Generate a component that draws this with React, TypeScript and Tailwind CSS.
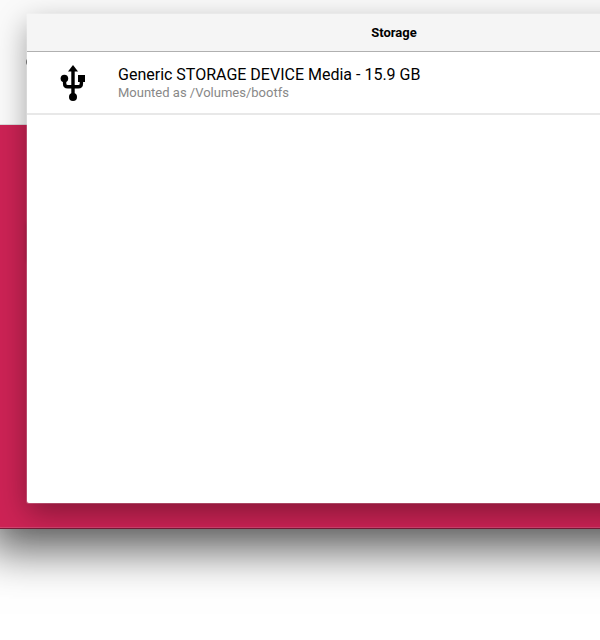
const drives = [
  { name: "Generic STORAGE DEVICE Media - 15.9 GB", mount: "Mounted as /Volumes/bootfs" },
];

function UsbIcon() {
  return (
    <svg viewBox="0 0 26 36" className="h-9 w-[26px] shrink-0" aria-hidden="true">
      <path d="M13 0 L18 6.5 H8 Z" />
      <path d="M13 5 V30 M4.6 14 V18.5 Q4.6 21.8 7.8 21.8 H18.2 Q21.4 21.8 21.4 18.5 V14" fill="none" stroke="#000" strokeWidth="3.4" />
      <circle cx="4.4" cy="13.5" r="3.8" />
      <rect x="18" y="10" width="7" height="7" />
      <circle cx="13" cy="32" r="4" />
    </svg>
  );
}

function StorageDialog() {
  return (
    <section
      role="dialog"
      aria-labelledby="storage-title"
      className="z-10 col-start-1 row-start-1 mt-[14px] mr-[39px] mb-[26px] ml-[27px] flex min-h-[489px] flex-col rounded-xs bg-white shadow-[0_0_0_1px_rgba(255,255,255,0.2),0_10px_30px_rgba(0,0,0,0.36)]"
    >
      <header className="border-b border-[#b0b0b0] bg-[#f5f5f5] py-[9px] text-center">
        <h1 id="storage-title" className="text-[13px] leading-[19px] font-bold">
          Storage
        </h1>
      </header>
      <ul>
        {drives.map((drive) => (
          <li key={drive.name} className="border-b-2 border-[#e8e8e8]">
            <button type="button" className="flex w-full items-center gap-8 pt-[13px] pb-3 pl-[33px] text-left">
              <UsbIcon />
              <span className="flex flex-col">
                <span className="text-base leading-5 whitespace-nowrap">{drive.name}</span>
                <span className="text-[13px] leading-4 text-[#888888]">{drive.mount}</span>
              </span>
            </button>
          </li>
        ))}
      </ul>
    </section>
  );
}

function AppWindow() {
  return (
    <div className="col-start-1 row-start-1 flex flex-col overflow-hidden border-b border-[#751c38]">
      <div className="flex h-[125px] items-center border-b border-[#dddddd] bg-[#fafafa] pl-[26px]">
        <span className="size-2 rounded-full bg-[#555555]" />
      </div>
      <div className="grow border-b border-[#d04570] bg-[#cd2355] pt-[95px] pl-[27px]">
        <div className="h-10 w-48 rounded-sm bg-white shadow-[0_2px_4px_rgba(0,0,0,0.2)]" />
      </div>
    </div>
  );
}

export default function App() {
  return (
    <main className="min-h-screen overflow-hidden bg-white font-[Roboto,sans-serif] text-black">
      <div className="-mr-[200px] grid grid-cols-1 shadow-[0_10px_42px_12px_rgba(0,0,0,0.62)]">
        <AppWindow />
        <StorageDialog />
      </div>
    </main>
  );
}
